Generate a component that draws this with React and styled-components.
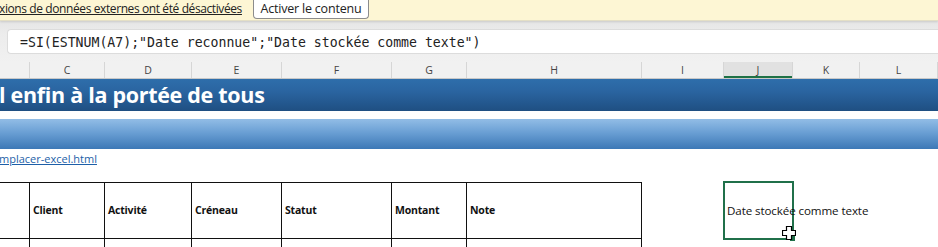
import React from "react";
import styled, { createGlobalStyle } from "styled-components";

const GlobalStyle = createGlobalStyle`
  html, body {
    margin: 0;
    padding: 0;
    background: #ffffff;
    overflow: hidden;
  }
  body {
    width: 938px;
    height: 247px;
    font-family: "Open Sans", "Noto Sans", sans-serif;
  }
`;

const COLS = [
  { id: "B", w: 30 },
  { id: "C", w: 75 },
  { id: "D", w: 87 },
  { id: "E", w: 90 },
  { id: "F", w: 110 },
  { id: "G", w: 75 },
  { id: "H", w: 175 },
  { id: "I", w: 82 },
  { id: "J", w: 69 },
  { id: "K", w: 67 },
  { id: "L", w: 78 },
];

const template = COLS.map((c) => `${c.w}px`).join(" ");

const headers = ["", "Client", "Activité", "Créneau", "Statut", "Montant", "Note"];

function App() {
  return (
    <>
      <GlobalStyle />
      <Screen>
        <MessageBar>
          <MessageText>xions de données externes ont été désactivées</MessageText>
          <EnableButton>Activer le contenu</EnableButton>
        </MessageBar>

        <FormulaArea>
          <FormulaBox>=SI(ESTNUM(A7);"Date reconnue";"Date stockée comme texte")</FormulaBox>
        </FormulaArea>

        <ColumnHeaders>
          {COLS.map((c) => (
            <ColumnHead key={c.id} $active={c.id === "J"}>
              {c.id === "B" ? "" : c.id}
            </ColumnHead>
          ))}
        </ColumnHeaders>

        <TitleBand>l enfin à la portée de tous</TitleBand>
        <SubBand />

        <LinkRow>
          <SheetLink>mplacer-excel.html</SheetLink>
        </LinkRow>

        <TableRow $height={56}>
          {COLS.map((c, i) => {
            if (c.id === "J") {
              return (
                <SelectedCell key={c.id}>
                  Date stockée comme texte
                  <FillHandle />
                  <Cursor>
                    <svg width="14" height="14" viewBox="0 0 14 14">
                      <path
                        d="M4.5 0.5h5v4h4v5h-4v4h-5v-4h-4v-5h4z"
                        fill="#fff"
                        stroke="#000"
                        strokeWidth="1.2"
                      />
                    </svg>
                  </Cursor>
                </SelectedCell>
              );
            }
            return (
              <TableCell key={c.id} $bordered={i < 7}>
                {headers[i] || ""}
              </TableCell>
            );
          })}
        </TableRow>
        <TableRow $height={12}>
          {COLS.map((c, i) => (
            <TableCell key={c.id} $bordered={i < 7} />
          ))}
        </TableRow>
      </Screen>
    </>
  );
}

const Screen = styled.div`
  width: 938px;
  height: 247px;
  overflow: hidden;
  display: flex;
  flex-direction: column;
`;

const MessageBar = styled.div`
  height: 20px;
  flex: none;
  display: flex;
  align-items: center;
  gap: 11px;
  background: #fdf6d4;
  border-bottom: 1px solid #e4dfc6;
  box-shadow: 0 1px 2px rgba(0, 0, 0, 0.12);
  position: relative;
`;

const MessageText = styled.span`
  font-size: 12px;
  letter-spacing: -0.4px;
  color: #222;
  text-decoration: underline;
  white-space: nowrap;
  margin-left: -1px;
  margin-top: -4px;
`;

const EnableButton = styled.button`
  height: 21px;
  margin-top: -3px;
  width: 116px;
  padding: 0;
  background: #ffffff;
  border: 1px solid #8c8c8c;
  border-top: none;
  border-radius: 0 0 4px 4px;
  font-family: "Open Sans", "Noto Sans", sans-serif;
  font-size: 12.5px;
  letter-spacing: -0.2px;
  color: #222;
`;

const FormulaArea = styled.div`
  flex: none;
  height: 41px;
  padding: 8px 0 7px 7px;
  box-sizing: border-box;
  background: linear-gradient(#e6e6e6, #ececec 30%, #f1f1f1);
  display: flex;
  align-items: flex-start;
`;

const FormulaBox = styled.div`
  flex: 1;
  height: 25px;
  background: #ffffff;
  border-radius: 4px 0 0 4px;
  border: 1px solid #dcdcdc;
  border-right: none;
  box-sizing: border-box;
  display: flex;
  align-items: center;
  padding-left: 12px;
  padding-top: 1px;
  font-family: "DejaVu Sans Mono", "Liberation Mono", monospace;
  font-size: 13.2px;
  color: #222;
  white-space: nowrap;
  overflow: hidden;
`;

const ColumnHeaders = styled.div`
  flex: none;
  display: grid;
  grid-template-columns: ${template};
  height: 16px;
  background: #f1f1f1;
  border-bottom: 1px solid #c8c8c8;
`;

const ColumnHead = styled.div`
  display: flex;
  align-items: center;
  justify-content: center;
  font-size: 10.5px;
  color: #444;
  border-right: 1px solid #d6d6d6;
  background: ${(p) => (p.$active ? "#e1e1e1" : "transparent")};
  box-shadow: ${(p) => (p.$active ? "inset 0 -2px 0 #1e7145" : "none")};
`;

const TitleBand = styled.div`
  flex: none;
  height: 31px;
  background: linear-gradient(#2e6eab, #2a64a0 40%, #1f4f82);
  color: #ffffff;
  font-family: "Open Sans", "Noto Sans", sans-serif;
  font-weight: 700;
  font-size: 21.5px;
  letter-spacing: -0.3px;
  display: flex;
  align-items: center;
  white-space: nowrap;
  margin-left: -1px;
  padding-bottom: 1px;
`;

const SubBand = styled.div`
  flex: none;
  height: 30px;
  margin-top: 8px;
  background: linear-gradient(#92bde6, #6a9fd4 45%, #3c78b6);
`;

const LinkRow = styled.div`
  flex: none;
  height: 33px;
  padding-top: 2px;
  box-sizing: border-box;
  font-size: 11px;
  line-height: 15px;
`;

const SheetLink = styled.a`
  font-family: "Open Sans", "Noto Sans", sans-serif;
  font-size: 11px;
  color: #1d5fa8;
  text-decoration: underline;
  margin-left: -1px;
`;

const TableRow = styled.div`
  flex: none;
  display: grid;
  grid-template-columns: ${template};
  height: ${(p) => p.$height}px;
`;

const TableCell = styled.div`
  box-sizing: border-box;
  border-top: ${(p) => (p.$bordered ? "1.5px solid #111" : "none")};
  border-right: ${(p) => (p.$bordered ? "1.5px solid #111" : "none")};
  display: flex;
  align-items: center;
  padding-left: 3px;
  padding-bottom: 1px;
  font-family: "Open Sans", "Noto Sans", sans-serif;
  font-weight: 700;
  font-size: 10.5px;
  letter-spacing: -0.2px;
  color: #111;
  white-space: nowrap;
`;

const SelectedCell = styled.div`
  position: relative;
  box-sizing: border-box;
  margin: -1px -1px -2px -1px;
  border: 2px solid #20704a;
  display: flex;
  align-items: center;
  padding-left: 2px;
  padding-bottom: 1px;
  font-family: "Open Sans", "Noto Sans", sans-serif;
  font-size: 11.6px;
  letter-spacing: -0.1px;
  color: #111;
  white-space: nowrap;
  overflow: visible;
  z-index: 1;
`;

const FillHandle = styled.span`
  position: absolute;
  right: -4px;
  bottom: -4px;
  width: 5px;
  height: 5px;
  background: #20704a;
  border: 1px solid #fff;
`;

const Cursor = styled.span`
  position: absolute;
  right: -4px;
  bottom: -2px;
  width: 14px;
  height: 14px;
  display: block;
  svg {
    display: block;
  }
`;

export default App;
